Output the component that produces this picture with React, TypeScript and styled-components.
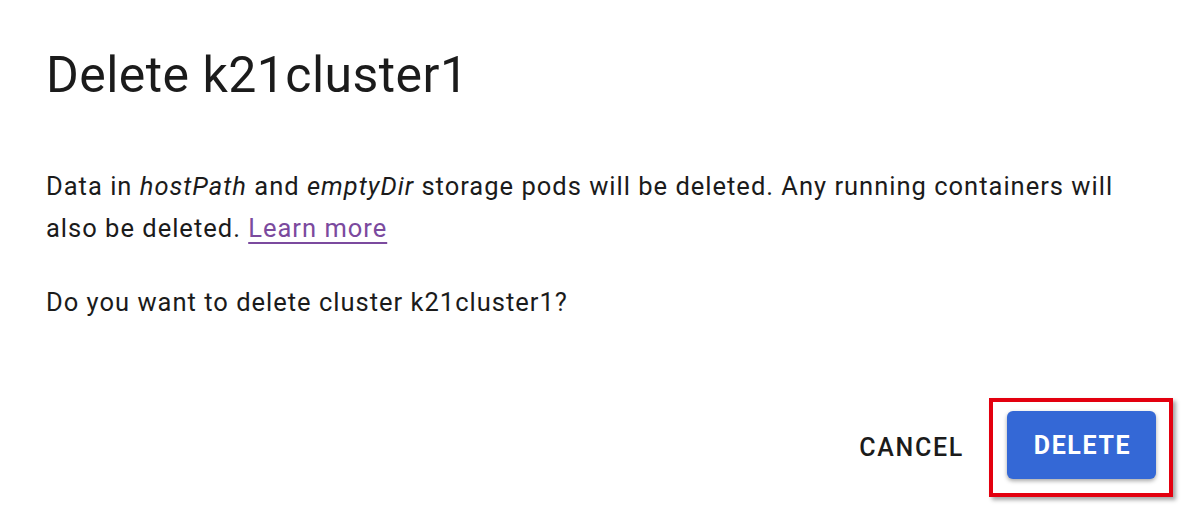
import React from "react";
import { styled, createGlobalStyle } from "styled-components";

const GlobalStyle = createGlobalStyle`
  html, body {
    margin: 0;
    padding: 0;
    background: #ffffff;
  }
  * {
    box-sizing: border-box;
  }
`;

const Dialog = styled.main`
  width: 1182px;
  height: 510px;
  display: flex;
  flex-direction: column;
  padding: 45px 9px 0 46px;
  font-family: Roboto, "Liberation Sans", sans-serif;
  color: #1b1b1b;
  background: #ffffff;
`;

const Title = styled.h1`
  margin: 0;
  font-size: 50px;
  font-weight: 400;
  line-height: 60px;
  letter-spacing: 0.45px;
`;

const Body = styled.p<{ $gap: number }>`
  margin: ${(p) => p.$gap}px 0 0 0;
  font-size: 25.5px;
  line-height: 42px;
  letter-spacing: 1px;
  max-width: 1100px;
`;

const Link = styled.a`
  color: #7b4a9e;
  text-decoration: underline;
  text-decoration-color: #7b4a9e;
  text-underline-offset: 5px;
  text-decoration-thickness: 2px;
`;

const Actions = styled.footer`
  margin-top: 75px;
  display: flex;
  justify-content: flex-end;
  align-items: center;
  gap: 12px;
`;

const TextButton = styled.button`
  border: none;
  background: transparent;
  font-family: Roboto, "Liberation Sans", sans-serif;
  font-size: 25px;
  font-weight: 500;
  color: #1b1b1b;
  padding: 10px 13px 10px 14px;
  letter-spacing: 1.7px;
  cursor: pointer;
`;

const Highlight = styled.span`
  display: inline-flex;
  border: 4px solid #e3000f;
  padding: 9px 13px 14px 14px;
  box-shadow: 3px 3px 4px rgba(0, 0, 0, 0.35);
`;

const RaisedButton = styled.button`
  width: 149px;
  height: 68px;
  border: none;
  border-radius: 6px;
  background: #3468d6;
  color: #ffffff;
  font-family: Roboto, "Liberation Sans", sans-serif;
  font-size: 25px;
  font-weight: 700;
  letter-spacing: 1.6px;
  padding: 0 0 0 2px;
  box-shadow: 0 2px 4px rgba(0, 0, 0, 0.35);
  cursor: pointer;
`;

export default function App() {
  return (
    <>
      <GlobalStyle />
      <Dialog>
        <Title>Delete k21cluster1</Title>
        <Body $gap={60}>
          Data in <em>hostPath</em> and <em>emptyDir</em> storage pods will be
          deleted. Any running containers will also be deleted.{" "}
          <Link href="#">Learn more</Link>
        </Body>
        <Body $gap={32}>Do you want to delete cluster k21cluster1?</Body>
        <Actions>
          <TextButton>CANCEL</TextButton>
          <Highlight>
            <RaisedButton>DELETE</RaisedButton>
          </Highlight>
        </Actions>
      </Dialog>
    </>
  );
}
